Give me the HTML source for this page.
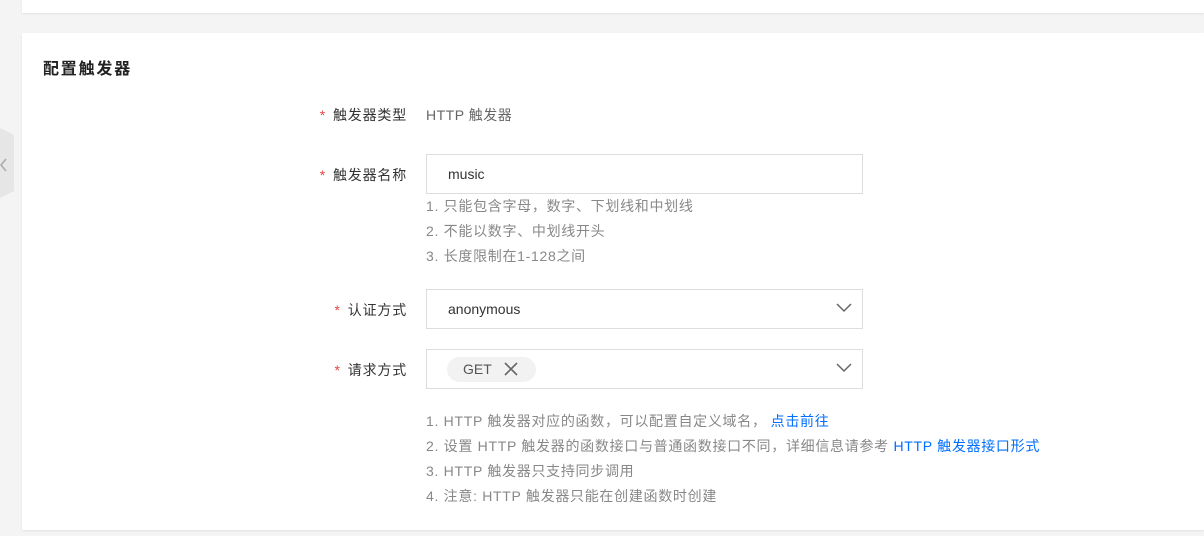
<!DOCTYPE html>
<html><head><meta charset="utf-8"><style>
body{margin:0;width:1204px;height:536px;background:#f4f4f4;position:relative;overflow:hidden;font-family:"Liberation Sans","Noto Sans CJK SC",sans-serif;font-size:14px;color:#333}
.card{position:absolute;left:22px;right:0;background:#fff;box-shadow:0 1px 2px rgba(0,0,0,.08)}
.a{position:absolute;white-space:nowrap}
.lab{right:797px;text-align:right;color:#333;letter-spacing:0.8px}
.lab i{color:#e54545;font-style:normal;margin-right:7px}
.box{position:absolute;left:426px;width:435px;height:38px;border:1px solid #ddd;background:#fff}
.tip{color:#888;font-size:14px;line-height:25px;letter-spacing:0.7px}
.chev{position:absolute;right:10px;top:13px}
</style></head><body>
<div class="card" style="top:0;height:13px"></div>
<div class="card" style="top:33px;height:497px"></div>
<div class="a" style="left:0;top:128px;width:14px;height:70px;background:#e6e6e6;clip-path:polygon(0 0,100% 10%,100% 90%,0 100%)"></div>
<svg class="a" style="left:0;top:158px" width="8" height="14"><path d="M6 1 1 7 6 13" stroke="#aaa" stroke-width="1.5" fill="none"/></svg>
<div class="a" style="left:43px;top:55px;font-size:16px;font-weight:bold;color:#222;letter-spacing:1.8px">配置触发器</div>
<div class="a lab" style="top:105px"><i>*</i>触发器类型</div>
<div class="a" style="left:426px;top:105px;color:#666;letter-spacing:0.5px">HTTP 触发器</div>
<div class="a lab" style="top:165px"><i>*</i>触发器名称</div>
<div class="box" style="top:154px;height:38px"><span class="a" style="left:21px;top:11px">music</span></div>
<div class="a tip" style="left:426px;top:194px">1. 只能包含字母，数字、下划线和中划线<br>2. 不能以数字、中划线开头<br>3. 长度限制在1-128之间</div>
<div class="a lab" style="top:300px"><i>*</i>认证方式</div>
<div class="box" style="top:289px"><span class="a" style="left:21px;top:11px">anonymous</span><svg class="chev" width="16" height="10"><path d="M1 1 8 8 15 1" stroke="#666" stroke-width="1.5" fill="none"/></svg></div>
<div class="a lab" style="top:360px"><i>*</i>请求方式</div>
<div class="box" style="top:349px"><div class="a" style="left:20px;top:7px;width:89px;height:25px;border-radius:13px;background:#f2f2f2"><span class="a" style="left:16px;top:4px;color:#555">GET</span><svg class="a" style="left:57px;top:5px" width="14" height="14"><path d="M1 1 13 13M13 1 1 13" stroke="#666" stroke-width="1.6"/></svg></div><svg class="chev" width="16" height="10"><path d="M1 1 8 8 15 1" stroke="#666" stroke-width="1.5" fill="none"/></svg></div>
<div class="a tip" style="left:426px;top:409px">1. HTTP 触发器对应的函数，可以配置自定义域名，<span style="color:#006eff;margin-left:4px">点击前往</span><br>2. 设置 HTTP 触发器的函数接口与普通函数接口不同，详细信息请参考 <span style="color:#006eff">HTTP 触发器接口形式</span><br>3. HTTP 触发器只支持同步调用<br>4. 注意: HTTP 触发器只能在创建函数时创建</div>
</body></html>
